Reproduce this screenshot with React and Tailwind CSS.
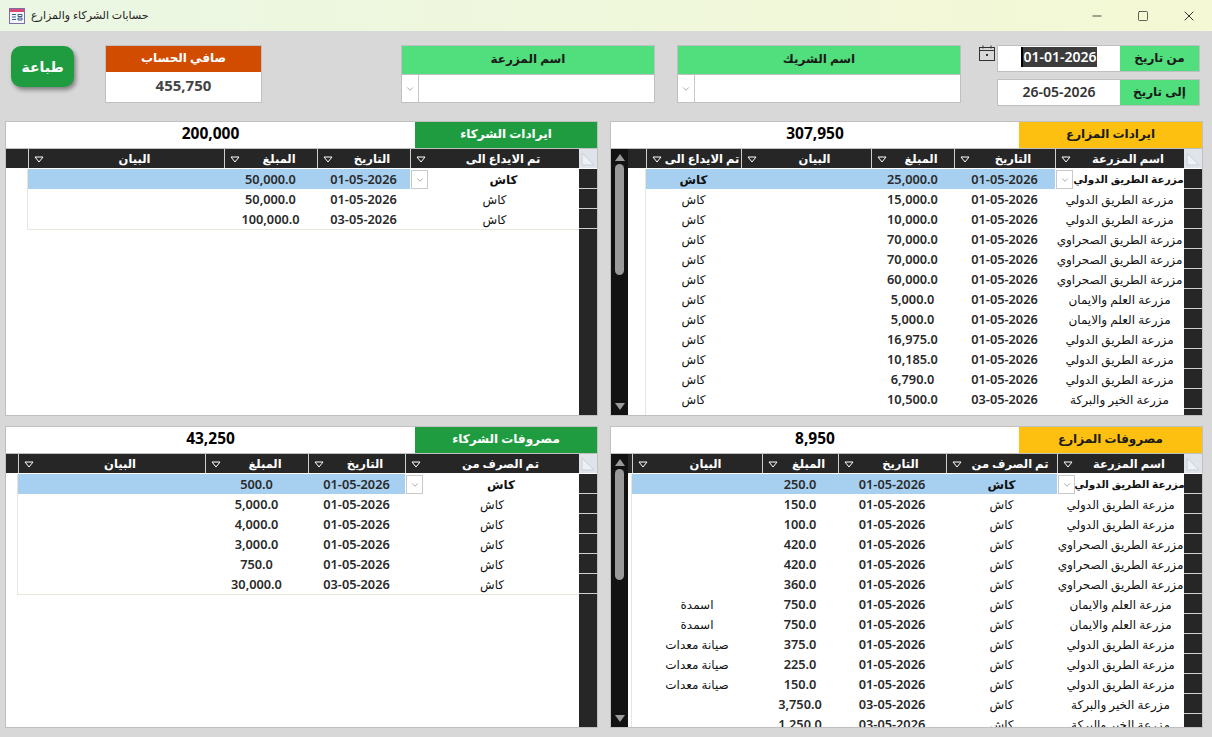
import React from 'react';
import { Minus, Square, X, ChevronDown } from 'lucide-react';

const D1 = '01-05-2026';
const D3 = '03-05-2026';
const TR = 'مزرعة الطريق الدولي';
const SA = 'مزرعة الطريق الصحراوي';
const AL = 'مزرعة العلم والايمان';
const KH = 'مزرعة الخير والبركة';
const CASH = 'كاش';

const panels = {
  farmIncome: {
    label: 'ايرادات المزارع',
    total: '307,950',
    labelWidth: 'w-[183px]',
    labelClass: 'bg-[#fec010] text-[#1a1a1a]',
    scroll: true,
    comboCol: 4,
    cols: [
      { title: 'تم الايداع الى', w: 'w-[95px]' },
      { title: 'البيان', w: 'w-[130px]' },
      { title: 'المبلغ', w: 'w-[83px]' },
      { title: 'التاريخ', w: 'w-[101px]' },
      { title: 'اسم المزرعة', w: 'w-[129px]' },
    ],
    width: 'w-[539px]',
    rows: [
      [CASH, '', '25,000.0', D1, TR],
      [CASH, '', '15,000.0', D1, TR],
      [CASH, '', '10,000.0', D1, TR],
      [CASH, '', '70,000.0', D1, SA],
      [CASH, '', '70,000.0', D1, SA],
      [CASH, '', '60,000.0', D1, SA],
      [CASH, '', '5,000.0', D1, AL],
      [CASH, '', '5,000.0', D1, AL],
      [CASH, '', '16,975.0', D1, TR],
      [CASH, '', '10,185.0', D1, TR],
      [CASH, '', '6,790.0', D1, TR],
      [CASH, '', '10,500.0', D3, KH],
      [CASH, '', '6,300.0', D3, KH],
    ],
  },
  partnerIncome: {
    label: 'ايرادات الشركاء',
    total: '200,000',
    labelWidth: 'w-[182px]',
    labelClass: 'bg-[#1f9c40] text-white',
    comboCol: 3,
    cols: [
      { title: 'البيان', w: 'w-[196px]' },
      { title: 'المبلغ', w: 'w-[93px]' },
      { title: 'التاريخ', w: 'w-[93px]' },
      { title: 'تم الايداع الى', w: 'w-[169px]' },
    ],
    width: 'w-[552px]',
    rows: [
      ['', '50,000.0', D1, CASH],
      ['', '50,000.0', D1, CASH],
      ['', '100,000.0', D3, CASH],
    ],
  },
  farmExpense: {
    label: 'مصروفات المزارع',
    total: '8,950',
    labelWidth: 'w-[183px]',
    labelClass: 'bg-[#fec010] text-[#1a1a1a]',
    scroll: true,
    comboCol: 4,
    cols: [
      { title: 'البيان', w: 'w-[130px]' },
      { title: 'المبلغ', w: 'w-[76px]' },
      { title: 'التاريخ', w: 'w-[108px]' },
      { title: 'تم الصرف من', w: 'w-[111px]' },
      { title: 'اسم المزرعة', w: 'w-[127px]' },
    ],
    width: 'w-[553px]',
    rows: [
      ['', '250.0', D1, CASH, TR],
      ['', '150.0', D1, CASH, TR],
      ['', '100.0', D1, CASH, TR],
      ['', '420.0', D1, CASH, SA],
      ['', '420.0', D1, CASH, SA],
      ['', '360.0', D1, CASH, SA],
      ['اسمدة', '750.0', D1, CASH, AL],
      ['اسمدة', '750.0', D1, CASH, AL],
      ['صيانة معدات', '375.0', D1, CASH, TR],
      ['صيانة معدات', '225.0', D1, CASH, TR],
      ['صيانة معدات', '150.0', D1, CASH, TR],
      ['', '3,750.0', D3, CASH, KH],
      ['', '1,250.0', D3, CASH, KH],
    ],
  },
  partnerExpense: {
    label: 'مصروفات الشركاء',
    total: '43,250',
    labelWidth: 'w-[182px]',
    labelClass: 'bg-[#1f9c40] text-white',
    comboCol: 3,
    cols: [
      { title: 'البيان', w: 'w-[187px]' },
      { title: 'المبلغ', w: 'w-[103px]' },
      { title: 'التاريخ', w: 'w-[97px]' },
      { title: 'تم الصرف من', w: 'w-[174px]' },
    ],
    width: 'w-[562px]',
    rows: [
      ['', '500.0', D1, CASH],
      ['', '5,000.0', D1, CASH],
      ['', '4,000.0', D1, CASH],
      ['', '3,000.0', D1, CASH],
      ['', '750.0', D1, CASH],
      ['', '30,000.0', D3, CASH],
    ],
  },
};

const FONT = "font-['Noto_Sans','DejaVu_Sans',sans-serif]";

const isArabic = (text) => /[\u0600-\u06ff]/.test(text);

const cellText = (cell, selected) => {
  if (!isArabic(cell)) return 'font-semibold text-[12.75px] text-[#2a2a2a]';
  if (!selected) return 'font-normal text-[12px] text-[#111]';
  return cell === CASH ? 'font-bold text-[12px] text-[#111]' : 'font-bold text-[10.5px] text-[#111]';
};

const SortArrow = () => (
  <svg width="10" height="7" viewBox="0 0 10 7" className="absolute left-[5px] top-[7px]">
    <path d="M1 1h8L5 6z" fill="none" stroke="#fff" strokeWidth="1" />
  </svg>
);

const ComboButton = ({ className = '' }) => (
  <span className={`flex items-center justify-center bg-white border border-[#c8c8c8] ${className}`}>
    <ChevronDown size={10} strokeWidth={1.2} className="text-[#555]" />
  </span>
);

const Scrollbar = () => (
  <div className="w-[17px] shrink-0 bg-[#121212] flex flex-col items-center py-[5px]">
    <svg width="10" height="7" viewBox="0 0 10 7" className="shrink-0">
      <path d="M5 0l5 7H0z" fill="#9a9a9a" />
    </svg>
    <div className="flex-1 w-full flex flex-col items-center mt-[3px]">
      <div className="w-[9px] h-[111px] rounded-full bg-[#9a9a9a]" />
    </div>
    <svg width="10" height="7" viewBox="0 0 10 7" className="shrink-0">
      <path d="M0 0h10L5 7z" fill="#9a9a9a" />
    </svg>
  </div>
);

const Panel = ({ data }) => {
  const { cols, rows, comboCol, scroll } = data;
  return (
    <div className="border border-[#c0c0c0] bg-white flex flex-col overflow-hidden">
      <div className="flex h-[26px] shrink-0 border-b border-[#c0c0c0] box-content">
        <div className={`flex-1 flex items-center justify-center pb-[2px] text-[15.5px] font-bold text-black ${FONT}`}>{data.total}</div>
        <div dir="rtl" className={`${data.labelWidth} ${data.labelClass} flex items-center justify-center pb-[2px] text-[12px] font-bold ${FONT}`}>
          {data.label}
        </div>
      </div>
      <div className="flex-1 flex min-h-0">
        {scroll && <Scrollbar />}
        <div className="flex-1 min-w-0 flex flex-col">
          <div className="h-[20px] shrink-0 bg-[#262626] border-b border-white flex justify-end">
            {cols.map((col) => (
              <div
                key={col.title}
                dir="rtl"
                className={`${col.w} relative shrink-0 border-l border-[#d0d0d0] pl-4 flex items-center justify-center text-white text-[11.5px] font-bold whitespace-nowrap ${FONT}`}
              >
                {col.title}
                <SortArrow />
              </div>
            ))}
          </div>
          <div className={`${data.width} ml-auto border-l border-b border-[#e8e6da]`}>
            {rows.map((row, r) => (
              <div key={r} className="h-[20px] flex">
                {row.map((cell, c) => {
                  const selected = r === 0;
                  const combo = selected && c === comboCol;
                  return (
                    <div
                      key={c}
                      dir={isArabic(cell) ? 'rtl' : 'ltr'}
                      className={`${cols[c].w} shrink-0 relative flex items-center justify-center pt-[1px] overflow-hidden whitespace-nowrap ${FONT} ${cellText(cell, selected)} ${
                        selected && !combo ? 'bg-[#a6cff0]' : ''
                      } ${combo ? 'pl-[18px]' : ''}`}
                    >
                      {combo && <ComboButton className="absolute left-[1px] top-[1px] w-[17px] h-[19px]" />}
                      {cell}
                    </div>
                  );
                })}
              </div>
            ))}
          </div>
        </div>
        <div className="w-[18px] shrink-0 bg-[#262626] flex flex-col">
          <div className="h-[20px] shrink-0 bg-[#dfe4ea] border-b border-white">
            <svg width="18" height="19" viewBox="0 0 18 19">
              <path d="M3 4l12 12H3z" fill="#eef1f4" stroke="#c9d0d8" strokeWidth="1" />
            </svg>
          </div>
          {rows.map((_, r) => (
            <div key={r} className="h-[20px] shrink-0 border-b border-[#d0d0d0]" />
          ))}
        </div>
      </div>
    </div>
  );
};

const Filter = ({ label, w }) => (
  <div className={`${w} h-[58px] shrink-0 mt-[14px] border border-[#c0c0c0] bg-white flex flex-col`}>
    <div dir="rtl" className={`h-[26px] shrink-0 bg-[#50df7c] border-b border-[#c0c0c0] box-content flex items-center justify-center pb-[2px] text-[12px] font-bold text-[#1a1a1a] ${FONT}`}>
      {label}
    </div>
    <div className="flex-1 flex">
      <ComboButton className="w-[17px] h-full border-y-0 border-l-0" />
    </div>
  </div>
);

const DateField = ({ label, value, active }) => (
  <div className="h-[27px] flex border border-[#c0c0c0] bg-white">
    <div className={`flex-1 flex items-center justify-center pb-[3px] text-[14px] font-semibold text-[#333] ${FONT}`}>
      {active ? <span className="bg-[#3c3c3c] text-white border-l-2 border-black leading-[20px]">{value}</span> : value}
    </div>
    <div dir="rtl" className={`w-[79px] bg-[#50df7c] flex items-center justify-center pb-[2px] text-[12px] font-bold text-[#1a1a1a] ${FONT}`}>
      {label}
    </div>
  </div>
);

export default function App() {
  return (
    <div className="w-[1212px] h-[737px] bg-[#d8d8d8] flex flex-col overflow-hidden">
      <div className="h-[31px] shrink-0 bg-gradient-to-r from-[#ebf7e4] to-[#f4f8d4] flex items-center pl-[9px]">
        <svg width="16" height="16" viewBox="0 0 16 16" className="shrink-0">
          <rect x="0.5" y="0.5" width="15" height="15" fill="#f4f6fb" stroke="#7d6ea8" />
          <rect x="1" y="1" width="14" height="3" fill="#d84a78" />
          <path d="M3 6.5h4M3 9h4M3 11.5h4M9 6.5h4v2H9zM9 10h4v2H9z" fill="none" stroke="#3c5a96" strokeWidth="1" />
        </svg>
        <span dir="rtl" className={`ml-[6px] text-[11px] text-[#222] ${FONT}`}>حسابات الشركاء والمزارع</span>
        <div className="ml-auto flex items-center text-[#222]">
          <Minus size={14} strokeWidth={1.4} className="mr-[33px]" />
          <Square size={12} strokeWidth={1.4} className="mr-[32px]" />
          <X size={16} strokeWidth={1.4} className="mr-[15px]" />
        </div>
      </div>

      <div className="h-[90px] shrink-0 flex items-start">
        <button dir="rtl" className={`w-[63px] h-[41px] ml-[11px] mt-[15px] shrink-0 rounded-[10px] bg-[#1f9c40] text-white text-[14px] font-bold shadow-[2px_3px_4px_rgba(0,0,0,0.4)] ${FONT}`}>
          طباعة
        </button>
        <div className="w-[157px] h-[58px] ml-[31px] mt-[14px] shrink-0 border border-[#c0c0c0] bg-white flex flex-col">
          <div dir="rtl" className={`h-[26px] shrink-0 bg-[#d24c00] text-white flex items-center justify-center pb-[2px] text-[12px] font-bold ${FONT}`}>
            صافي الحساب
          </div>
          <div className={`flex-1 flex items-center justify-center pb-1 text-[15px] font-bold text-[#444] ${FONT}`}>455,750</div>
        </div>
        <div className="ml-[139px]"><Filter label="اسم المزرعة" w="w-[254px]" /></div>
        <div className="ml-[22px]"><Filter label="اسم الشريك" w="w-[284px]" /></div>
        <svg width="16" height="17" viewBox="0 0 16 17" fill="none" stroke="#333" strokeWidth="1" className="ml-[18px] mt-[14px] shrink-0">
          <rect x="0.5" y="2.5" width="15" height="13" />
          <path d="M0.5 5.5h15M4 0.5v3M12 0.5v3" />
          <rect x="7" y="9" width="2" height="2" fill="#333" stroke="none" />
        </svg>
        <div className="w-[203px] ml-[2px] mt-[14px] shrink-0 flex flex-col gap-[7px]">
          <DateField label="من تاريخ" value="01-01-2026" active />
          <DateField label="إلى تاريخ" value="26-05-2026" />
        </div>
      </div>

      <div className="pl-[5px] grid grid-cols-[593px_593px] grid-rows-[295px_302px] gap-x-3 gap-y-2.5">
        <Panel data={panels.partnerIncome} />
        <Panel data={panels.farmIncome} />
        <Panel data={panels.partnerExpense} />
        <Panel data={panels.farmExpense} />
      </div>
    </div>
  );
}
